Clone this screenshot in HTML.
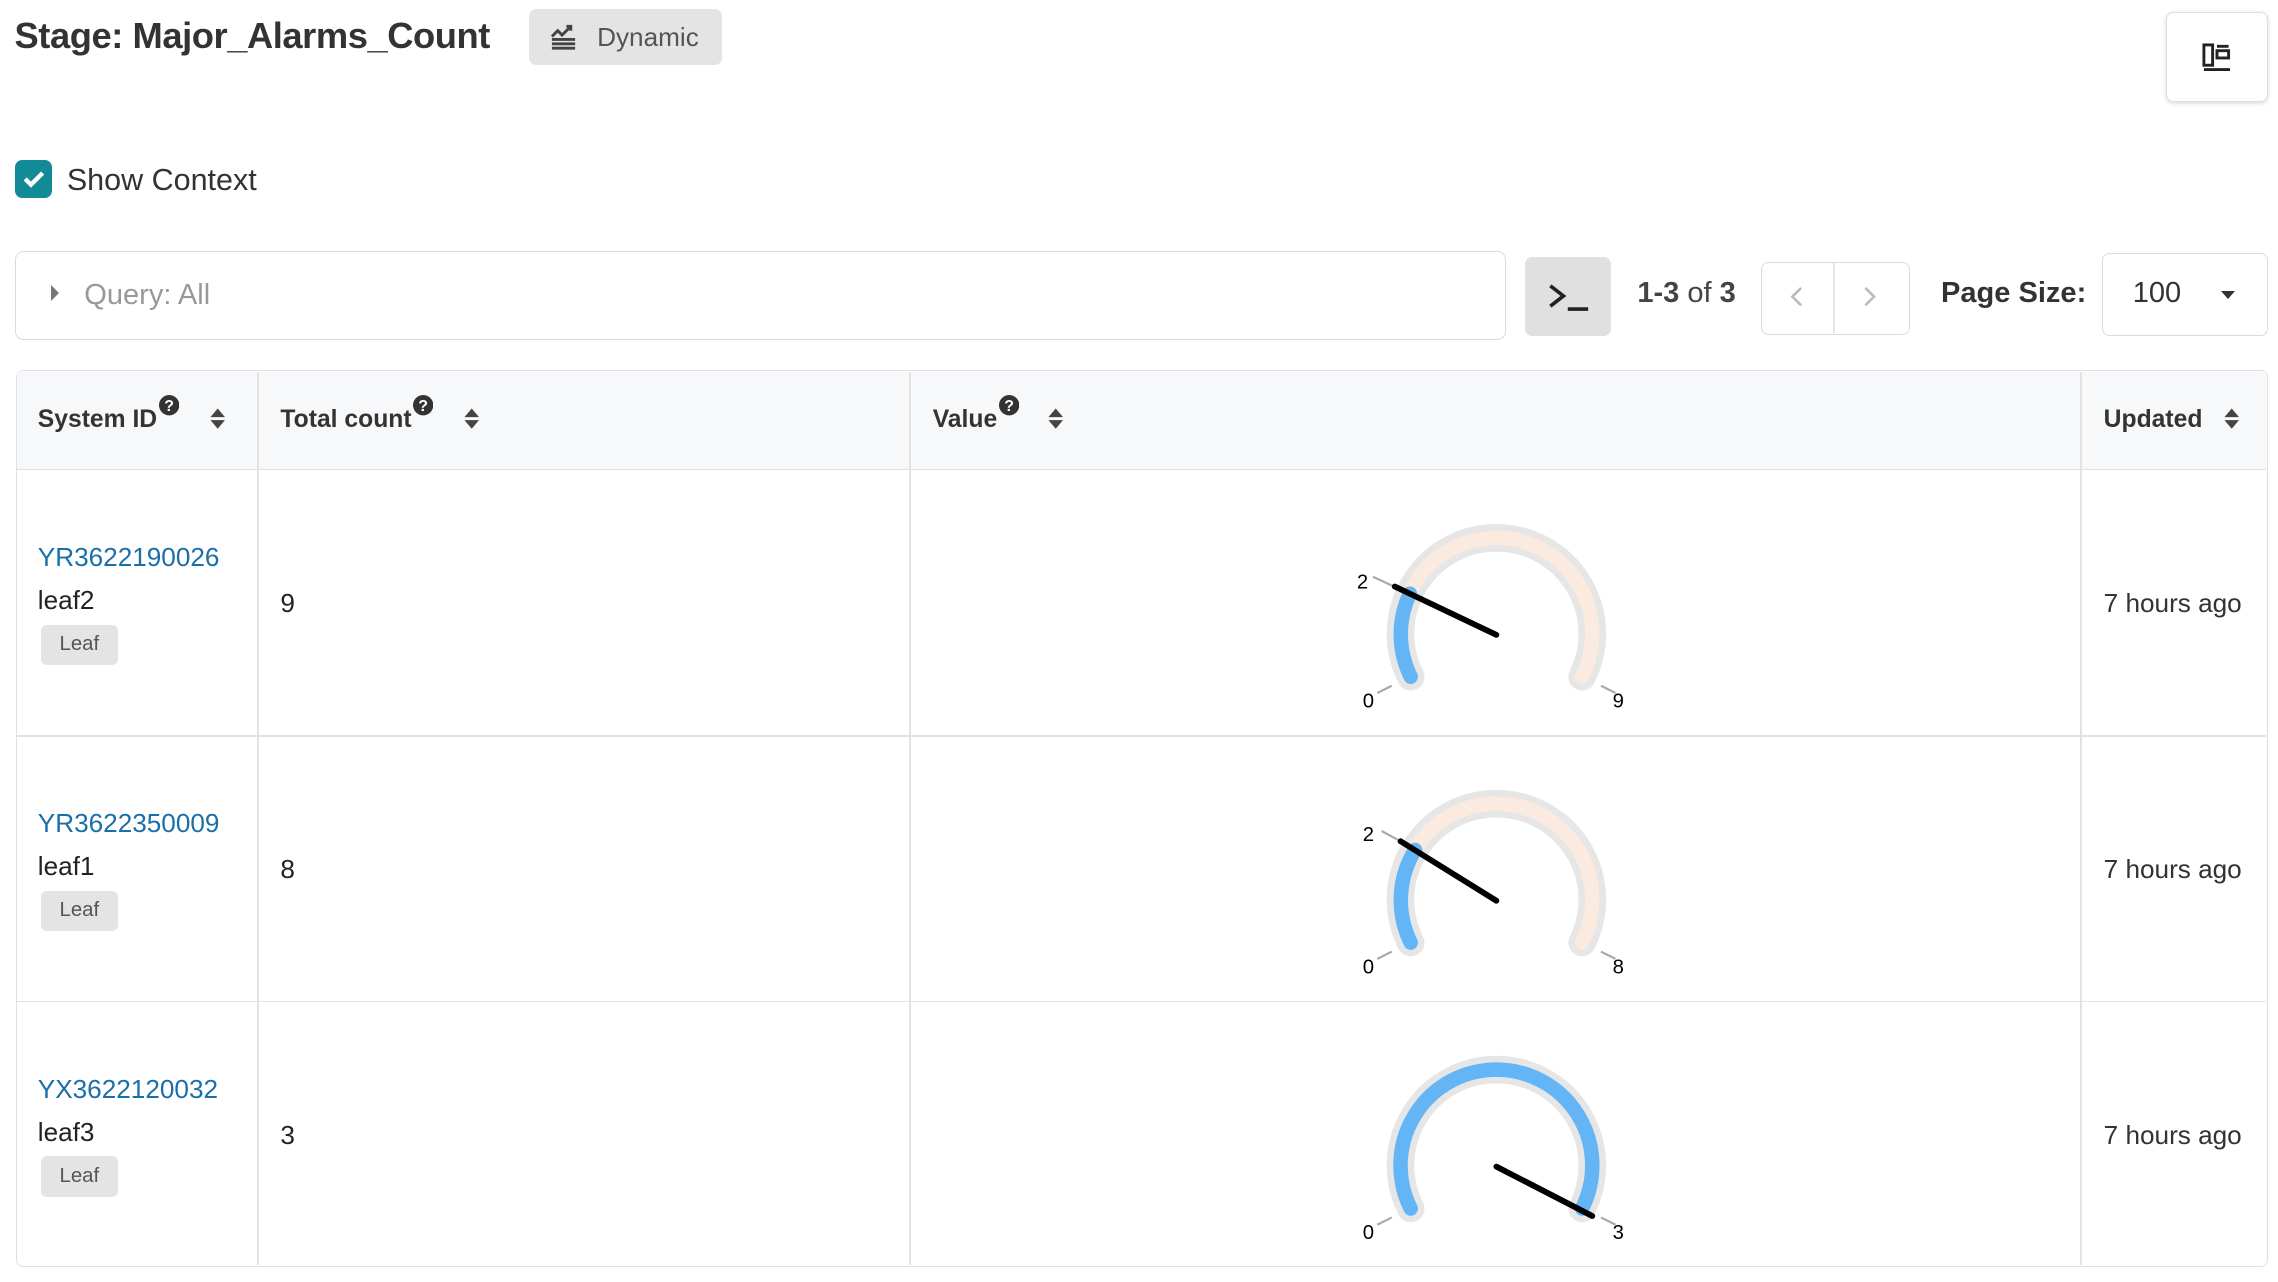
<!DOCTYPE html>
<html><head><meta charset="utf-8"><style>
html,body{margin:0;padding:0;background:#fff;overflow:hidden;width:2278px;height:1282px}
#w{zoom:1.45281;position:relative;width:1568px;height:882px;font-family:"Liberation Sans",sans-serif;color:#222}
.a{position:absolute}
.h{font-weight:bold;font-size:17px;color:#333;white-space:nowrap;line-height:20px}
.h svg{position:relative;top:-8px;vertical-align:baseline;margin-left:1px}
.link{color:#1b6fa8;font-size:18px}
.tag{background:#e4e4e4;border-radius:4px;font-size:14px;color:#555;padding:6px 13px}
</style></head><body><div id="w">
<div class="a" style="left:10px;top:10px;font-size:25px;font-weight:bold;color:#333;letter-spacing:-0.3px">Stage: Major_Alarms_Count</div>
<div class="a" style="left:364px;top:6px;width:133px;height:39px;background:#e4e4e4;border-radius:5px"></div>
<svg class="a" style="left:378px;top:15px" width="20" height="20" viewBox="0 0 20 20"><path d="M2 10l4-4 3 3 6-6M12 3h3v3" stroke="#444" stroke-width="2" fill="none"/><path d="M2 12h16M2 15h16M2 18h16" stroke="#444" stroke-width="2"/></svg>
<div class="a" style="left:411px;top:15px;font-size:18px;color:#555">Dynamic</div>
<div class="a" style="left:1491px;top:8px;width:69px;height:61px;border:1px solid #ddd;border-radius:5px;box-shadow:0 1px 3px rgba(0,0,0,.15)"></div>
<svg class="a" style="left:1515px;top:29px" width="22" height="22" viewBox="0 0 22 22"><rect x="2" y="2" width="6" height="14" fill="none" stroke="#222" stroke-width="2"/><rect x="11" y="6" width="8" height="5" fill="none" stroke="#222" stroke-width="2"/><path d="M11 3h8M2 19h18" stroke="#222" stroke-width="2"/></svg>
<div class="a" style="left:10px;top:110px;width:26px;height:26px;background:#138b96;border-radius:5px"></div>
<svg class="a" style="left:10px;top:110px" width="26" height="26"><path d="M7 13l4 4 8-8" stroke="#fff" stroke-width="3" fill="none"/></svg>
<div class="a" style="left:46px;top:112px;font-size:21px;color:#333">Show Context</div>
<div class="a" style="left:10px;top:173px;width:1025px;height:60px;border:1px solid #d8dce2;border-radius:6px"></div>
<div class="a" style="left:35px;top:196px;width:0;height:0;border-left:6px solid #777;border-top:6px solid transparent;border-bottom:6px solid transparent"></div>
<div class="a" style="left:58px;top:192px;font-size:20px;color:#999">Query: All</div>
<div class="a" style="left:1050px;top:177px;width:59px;height:54px;background:#e0e0e0;border-radius:5px"></div>
<svg class="a" style="left:1064px;top:193px" width="32" height="24"><path d="M3 4l9 7-9 7" stroke="#222" stroke-width="2.5" fill="none"/><path d="M15 20h14" stroke="#222" stroke-width="2.5"/></svg>
<div class="a" style="left:1127px;top:191px;font-size:20px;font-weight:bold;color:#444">1-3 <span style="font-weight:normal">of</span> 3</div>
<div class="a" style="left:1212px;top:180px;width:101px;height:49px;border:1px solid #d8dce2;border-radius:5px"></div>
<div class="a" style="left:1262px;top:181px;width:1px;height:48px;background:#e4e4e4"></div>
<svg class="a" style="left:1231px;top:196px" width="12" height="16"><path d="M9 2L3 8l6 6" stroke="#bbb" stroke-width="1.8" fill="none"/></svg>
<svg class="a" style="left:1281px;top:196px" width="12" height="16"><path d="M3 2l6 6-6 6" stroke="#bbb" stroke-width="1.8" fill="none"/></svg>
<div class="a" style="left:1336px;top:191px;font-size:20px;font-weight:bold;color:#333">Page Size:</div>
<div class="a" style="left:1447px;top:174px;width:113px;height:56px;border:1px solid #d8dce2;border-radius:5px"></div>
<div class="a" style="left:1468px;top:191px;font-size:20px;color:#333">100</div>
<div class="a" style="left:1529px;top:200px;border-top:6px solid #333;border-left:5px solid transparent;border-right:5px solid transparent"></div>
<div class="a" style="left:11px;top:255px;width:1549px;height:616px;border:1px solid #dde0e4;border-radius:5px"></div>
<div class="a" style="left:12px;top:256px;width:1548px;height:67px;background:#f7f8fa;border-bottom:1px solid #dde0e4"></div>
<div class="a" style="left:12px;top:506px;width:1548px;height:1px;background:#e2e2e2"></div>
<div class="a" style="left:12px;top:689px;width:1548px;height:1px;background:#e2e2e2"></div>
<div class="a" style="left:177px;top:256px;width:1px;height:615px;background:#e2e2e2"></div>
<div class="a" style="left:626px;top:256px;width:1px;height:615px;background:#e2e2e2"></div>
<div class="a" style="left:1432px;top:256px;width:1px;height:615px;background:#e2e2e2"></div>
<div class="a h" style="left:26px;top:279px">System ID<svg width="14" height="14"><circle cx="7" cy="7" r="7" fill="#333"/><text x="7" y="11" font-size="11" fill="#fff" text-anchor="middle" font-weight="bold">?</text></svg></div>
<div class="a h" style="left:193px;top:279px">Total count<svg width="14" height="14"><circle cx="7" cy="7" r="7" fill="#333"/><text x="7" y="11" font-size="11" fill="#fff" text-anchor="middle" font-weight="bold">?</text></svg></div>
<div class="a h" style="left:642px;top:279px">Value<svg width="14" height="14"><circle cx="7" cy="7" r="7" fill="#333"/><text x="7" y="11" font-size="11" fill="#fff" text-anchor="middle" font-weight="bold">?</text></svg></div>
<div class="a h" style="left:1448px;top:279px">Updated</div>
<svg class="a" style="left:144px;top:280px" width="12" height="16"><path d="M1 7l5-6 5 6zM1 9l5 6 5-6z" fill="#444"/></svg>
<svg class="a" style="left:319px;top:280px" width="12" height="16"><path d="M1 7l5-6 5 6zM1 9l5 6 5-6z" fill="#444"/></svg>
<svg class="a" style="left:721px;top:280px" width="12" height="16"><path d="M1 7l5-6 5 6zM1 9l5 6 5-6z" fill="#444"/></svg>
<svg class="a" style="left:1530px;top:280px" width="12" height="16"><path d="M1 7l5-6 5 6zM1 9l5 6 5-6z" fill="#444"/></svg>

<div class="a link" style="left:26px;top:373px">YR3622190026</div>
<div class="a" style="left:26px;top:403px;font-size:18px">leaf2</div>
<div class="a tag" style="left:28px;top:430px">Leaf</div>
<div class="a" style="left:193px;top:405px;font-size:18px">9</div>
<div class="a" style="left:1448px;top:405px;font-size:18px;color:#333">7 hours ago</div>

<div class="a link" style="left:26px;top:556px">YR3622350009</div>
<div class="a" style="left:26px;top:586px;font-size:18px">leaf1</div>
<div class="a tag" style="left:28px;top:613px">Leaf</div>
<div class="a" style="left:193px;top:588px;font-size:18px">8</div>
<div class="a" style="left:1448px;top:588px;font-size:18px;color:#333">7 hours ago</div>

<div class="a link" style="left:26px;top:739px">YX3622120032</div>
<div class="a" style="left:26px;top:769px;font-size:18px">leaf3</div>
<div class="a tag" style="left:28px;top:796px">Leaf</div>
<div class="a" style="left:193px;top:771px;font-size:18px">3</div>
<div class="a" style="left:1448px;top:771px;font-size:18px;color:#333">7 hours ago</div>

<svg class="a" style="left:0;top:0" width="1568" height="882" font-family="Liberation Sans" font-size="14">
<g transform="translate(1030,437)">
<path d="M-59 28.8A66 66 0 1 1 59 28.8" stroke="#e6e6e6" stroke-width="19" fill="none" stroke-linecap="round"/>
<path d="M-59 28.8A66 66 0 1 1 59 28.8" stroke="#fbeadf" stroke-width="10" fill="none" stroke-linecap="round"/>
<path d="M-59 28.8A66 66 0 0 1 -59.6 -28.4" stroke="#64b5f6" stroke-width="10" fill="none" stroke-linecap="round"/>
<path d="M0 0L-70 -33.3" stroke="#000" stroke-width="4" stroke-linecap="round"/>
<path d="M-72 -34L-85 -40M-72 35L-82 40M72 35L82 40" stroke="#aaa" stroke-width="1.5"/>
<text x="-96" y="-32">2</text><text x="-92" y="50">0</text><text x="80" y="50">9</text>
</g>
<g transform="translate(1030,620)">
<path d="M-59 28.8A66 66 0 1 1 59 28.8" stroke="#e6e6e6" stroke-width="19" fill="none" stroke-linecap="round"/>
<path d="M-59 28.8A66 66 0 1 1 59 28.8" stroke="#fbeadf" stroke-width="10" fill="none" stroke-linecap="round"/>
<path d="M-59 28.8A66 66 0 0 1 -56 -35" stroke="#64b5f6" stroke-width="10" fill="none" stroke-linecap="round"/>
<path d="M0 0L-66 -41" stroke="#000" stroke-width="4" stroke-linecap="round"/>
<path d="M-68 -42L-79 -48M-72 35L-82 40M72 35L82 40" stroke="#aaa" stroke-width="1.5"/>
<text x="-92" y="-41">2</text><text x="-92" y="50">0</text><text x="80" y="50">8</text>
</g>
<g transform="translate(1030,803)">
<path d="M-59 28.8A66 66 0 1 1 59 28.8" stroke="#e6e6e6" stroke-width="19" fill="none" stroke-linecap="round"/>
<path d="M-59 28.8A66 66 0 1 1 59 28.8" stroke="#64b5f6" stroke-width="10" fill="none" stroke-linecap="round"/>
<path d="M0 0L66 34" stroke="#000" stroke-width="4" stroke-linecap="round"/>
<path d="M-72 35L-82 40M72 35L82 40" stroke="#aaa" stroke-width="1.5"/>
<text x="-92" y="50">0</text><text x="80" y="50">3</text>
</g>
</svg>
</div></body></html>
